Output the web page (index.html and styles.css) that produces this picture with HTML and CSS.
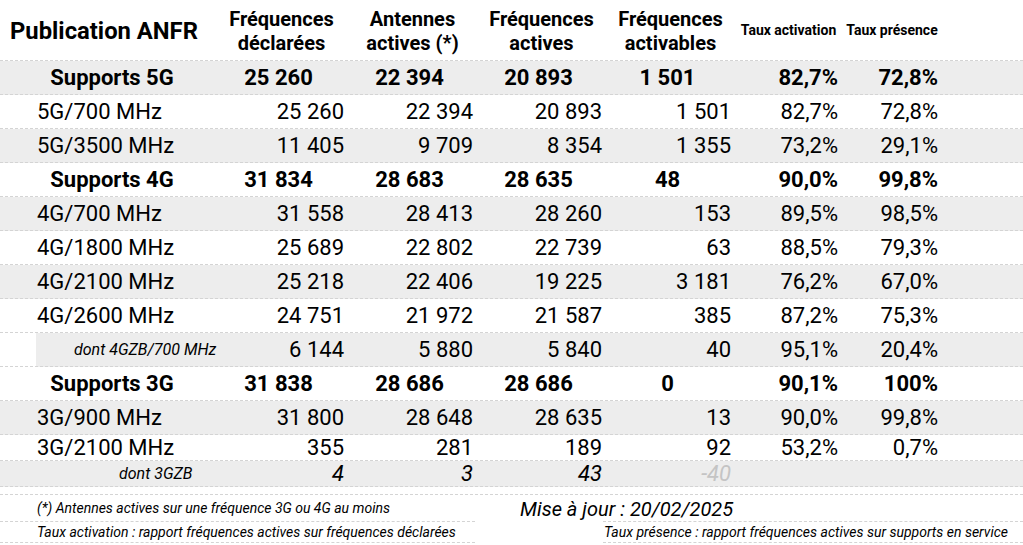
FILE: index.html
```html
<!DOCTYPE html>
<html lang="fr">
<head>
<meta charset="utf-8">
<title>Publication ANFR</title>
<link rel="stylesheet" href="styles.css">
</head>
<body>
<div class="sheet">
  <div class="row head">
    <div class="c title">Publication ANFR</div>
    <div class="c hd">Fréquences<br>déclarées</div>
    <div class="c hd">Antennes<br>actives (*)</div>
    <div class="c hd">Fréquences<br>actives</div>
    <div class="c hd">Fréquences<br>activables</div>
    <div class="c hds">Taux activation</div>
    <div class="c hds">Taux présence</div>
    <div class="c"></div>
  </div>

  <div class="row alt bold">
    <div class="c lab">Supports 5G</div>
    <div class="c ctr">25 260</div><div class="c ctr">22 394</div><div class="c ctr">20 893</div><div class="c ctr">1 501</div>
    <div class="c num">82,7%</div><div class="c num">72,8%</div><div class="c"></div>
  </div>
  <div class="row">
    <div class="c lab">5G/700 MHz</div>
    <div class="c num">25 260</div><div class="c num">22 394</div><div class="c num">20 893</div><div class="c num">1 501</div>
    <div class="c num">82,7%</div><div class="c num">72,8%</div><div class="c"></div>
  </div>
  <div class="row alt">
    <div class="c lab">5G/3500 MHz</div>
    <div class="c num">11 405</div><div class="c num">9 709</div><div class="c num">8 354</div><div class="c num">1 355</div>
    <div class="c num">73,2%</div><div class="c num">29,1%</div><div class="c"></div>
  </div>

  <div class="row bold">
    <div class="c lab">Supports 4G</div>
    <div class="c ctr">31 834</div><div class="c ctr">28 683</div><div class="c ctr">28 635</div><div class="c ctr">48</div>
    <div class="c num">90,0%</div><div class="c num">99,8%</div><div class="c"></div>
  </div>
  <div class="row alt">
    <div class="c lab">4G/700 MHz</div>
    <div class="c num">31 558</div><div class="c num">28 413</div><div class="c num">28 260</div><div class="c num">153</div>
    <div class="c num">89,5%</div><div class="c num">98,5%</div><div class="c"></div>
  </div>
  <div class="row">
    <div class="c lab">4G/1800 MHz</div>
    <div class="c num">25 689</div><div class="c num">22 802</div><div class="c num">22 739</div><div class="c num">63</div>
    <div class="c num">88,5%</div><div class="c num">79,3%</div><div class="c"></div>
  </div>
  <div class="row alt">
    <div class="c lab">4G/2100 MHz</div>
    <div class="c num">25 218</div><div class="c num">22 406</div><div class="c num">19 225</div><div class="c num">3 181</div>
    <div class="c num">76,2%</div><div class="c num">67,0%</div><div class="c"></div>
  </div>
  <div class="row">
    <div class="c lab">4G/2600 MHz</div>
    <div class="c num">24 751</div><div class="c num">21 972</div><div class="c num">21 587</div><div class="c num">385</div>
    <div class="c num">87,2%</div><div class="c num">75,3%</div><div class="c"></div>
  </div>
  <div class="row indent">
    <div class="c lab sub sub4">dont 4GZB/700 MHz</div>
    <div class="c num">6 144</div><div class="c num">5 880</div><div class="c num">5 840</div><div class="c num">40</div>
    <div class="c num">95,1%</div><div class="c num">20,4%</div><div class="c"></div>
  </div>

  <div class="row bold">
    <div class="c lab">Supports 3G</div>
    <div class="c ctr">31 838</div><div class="c ctr">28 686</div><div class="c ctr">28 686</div><div class="c ctr">0</div>
    <div class="c num">90,1%</div><div class="c num">100%</div><div class="c"></div>
  </div>
  <div class="row alt">
    <div class="c lab">3G/900 MHz</div>
    <div class="c num">31 800</div><div class="c num">28 648</div><div class="c num">28 635</div><div class="c num">13</div>
    <div class="c num">90,0%</div><div class="c num">99,8%</div><div class="c"></div>
  </div>
  <div class="row short">
    <div class="c lab">3G/2100 MHz</div>
    <div class="c num">355</div><div class="c num">281</div><div class="c num">189</div><div class="c num">92</div>
    <div class="c num">53,2%</div><div class="c num">0,7%</div><div class="c"></div>
  </div>
  <div class="row alt short ital">
    <div class="c lab sub sub3">dont 3GZB</div>
    <div class="c num">4</div><div class="c num">3</div><div class="c num">43</div><div class="c num muted">-40</div>
    <div class="c num"></div><div class="c num"></div><div class="c"></div>
  </div>

  <div class="spacer"></div>

  <div class="foot">
    <div class="f note1">(*) Antennes actives sur une fréquence 3G ou 4G au moins</div>
    <div class="f update">Mise à jour : 20/02/2025</div>
    <div class="f note2">Taux activation : rapport fréquences actives sur fréquences déclarées</div>
    <div class="f gap"></div>
    <div class="f note3">Taux présence : rapport fréquences actives sur supports en service</div>
  </div>
</div>
</body>
</html>
```

FILE: styles.css
```css
html, body {
  margin: 0;
  padding: 0;
  background: #ffffff;
}

body {
  font-family: Roboto, "Liberation Sans", sans-serif;
  color: #000000;
  width: 1023px;
  height: 545px;
  overflow: hidden;
}

.sheet {
  width: 1023px;
}

.row {
  display: grid;
  grid-template-columns: 215px 133px 129px 129px 129px 107px 100px 1fr;
  height: 34px;
  box-sizing: border-box;
  border-bottom: 1px dashed #d4d4d4;
  font-size: 22px;
  align-items: center;
  white-space: nowrap;
}

.row.alt {
  background: #ededed;
}

.row.indent {
  background: linear-gradient(to right, #ffffff 36px, #ededed 36px);
}

.row.short {
  height: 26px;
}

.row.head {
  height: 61px;
  font-weight: 700;
}

.row.bold {
  font-weight: 700;
}

.c {
  line-height: 26px;
}

.title {
  font-size: 23.8px;
  padding-left: 10px;
  padding-top: 2px;
}

.hd {
  font-size: 20px;
  line-height: 24px;
  text-align: center;
  padding-top: 2px;
}

.hds {
  font-size: 14px;
  text-align: center;
}

.lab {
  padding-left: 37px;
}

.bold .lab {
  padding-left: 9px;
  text-align: center;
}

.sub {
  font-style: italic;
  font-size: 16px;
}

.sub4 {
  padding-left: 74px;
}

.sub3 {
  padding-left: 119px;
}

.num {
  text-align: right;
  padding-right: 4px;
}

.ctr {
  text-align: center;
  padding-right: 6px;
}

.ital .num {
  font-style: italic;
}

.muted {
  color: #c4c4c4;
}

.spacer {
  height: 8px;
  box-sizing: border-box;
  border-bottom: 1px dashed #d4d4d4;
}

.foot {
  display: grid;
  grid-template-columns: 475px 128px 420px;
  grid-template-rows: 27px 21px;
  font-style: italic;
  font-size: 14px;
  white-space: nowrap;
}

.f {
  box-sizing: border-box;
  display: flex;
  align-items: center;
}

.note1 {
  padding-left: 37px;
  border-bottom: 1px dashed #d4d4d4;
}

.update {
  grid-column: 2 / 4;
  font-size: 20px;
  padding-left: 45px;
}

.note2 {
  padding-left: 37px;
  border-bottom: 1px dashed #d4d4d4;
}

.note3 {
  padding-left: 1px;
  border-top: 1px dashed #d4d4d4;
  border-bottom: 1px dashed #d4d4d4;
  margin-top: -1px;
}
```
